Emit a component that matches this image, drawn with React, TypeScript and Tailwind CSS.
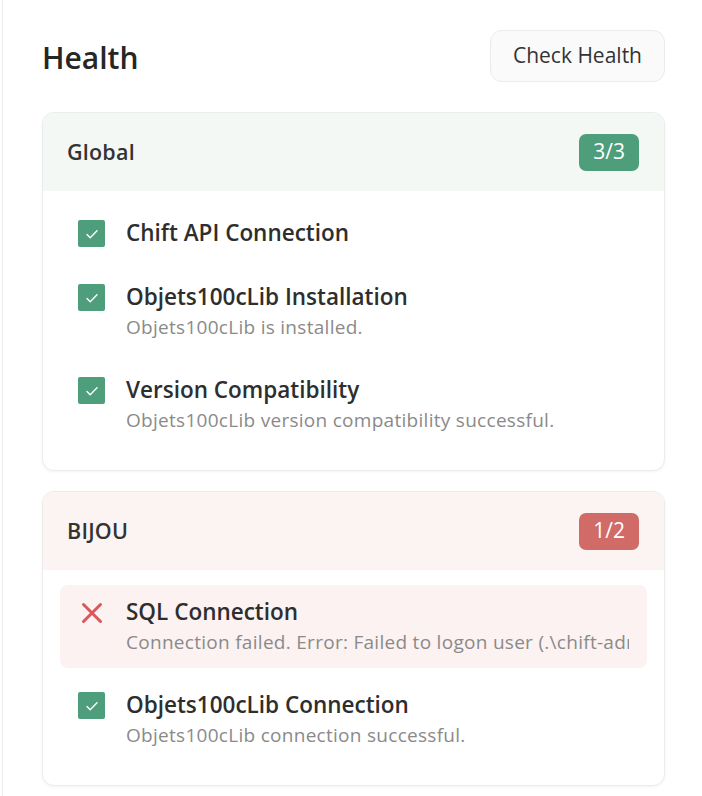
import React from 'react';

type Check = {
  title: string;
  detail?: string;
  ok: boolean;
};

type Group = {
  name: string;
  checks: Check[];
};

const groups: Group[] = [
  {
    name: 'Global',
    checks: [
      { title: 'Chift API Connection', ok: true },
      { title: 'Objets100cLib Installation', detail: 'Objets100cLib is installed.', ok: true },
      {
        title: 'Version Compatibility',
        detail: 'Objets100cLib version compatibility successful.',
        ok: true,
      },
    ],
  },
  {
    name: 'BIJOU',
    checks: [
      {
        title: 'SQL Connection',
        detail:
          'Connection failed. Error: Failed to logon user (.\\chift-admin): The user name or password is incorrect.',
        ok: false,
      },
      {
        title: 'Objets100cLib Connection',
        detail: 'Objets100cLib connection successful.',
        ok: true,
      },
    ],
  },
];

function CheckedBox() {
  return (
    <span className="flex h-[27px] w-[27px] shrink-0 items-center justify-center rounded-[2px] bg-[#4e9e7b]">
      <svg width="16" height="16" viewBox="0 0 16 16" fill="none">
        <path d="M3 8.5l3.2 3.2L13 4.8" stroke="#ffffff" strokeWidth="1.4" strokeLinecap="round" strokeLinejoin="round" />
      </svg>
    </span>
  );
}

function FailCross() {
  return (
    <span className="flex h-[27px] w-[27px] shrink-0 items-center justify-center">
      <svg width="24" height="24" viewBox="0 0 24 24" fill="none">
        <path d="M3.5 3.5l17 17M20.5 3.5l-17 17" stroke="#d9585a" strokeWidth="3" strokeLinecap="round" />
      </svg>
    </span>
  );
}

function GroupCard({ group }: { group: Group }) {
  const passed = group.checks.filter((c) => c.ok).length;
  const allOk = passed === group.checks.length;

  return (
    <div className="overflow-hidden rounded-xl border border-[#ececec] bg-white shadow-[0_1px_3px_rgba(0,0,0,0.05)]">
      <div
        className={`flex h-[78px] items-center justify-between pl-[24px] pr-[25px] ${
          allOk ? 'bg-[#f3f8f5]' : 'bg-[#fbf4f2]'
        }`}
      >
        <span className="text-[21.5px] font-semibold tracking-[0.01em] text-[#333333]">{group.name}</span>
        <span
          className={`flex h-[37px] items-center rounded-[7px] px-[14px] text-[21px] text-white ${
            allOk ? 'bg-[#4e9e7b]' : 'bg-[#d06b68]'
          }`}
        >
          {passed}/{group.checks.length}
        </span>
      </div>
      <div className="flex flex-col gap-[10px] px-[17px] pb-[24px] pt-[15px]">
        {group.checks.map((check, i) => (
          <div
            key={i}
            className={`flex gap-[21px] rounded-lg px-[18px] py-[11px] ${check.ok ? '' : 'bg-[#fcf2f1]'}`}
          >
            <div className="pt-[3px]">{check.ok ? <CheckedBox /> : <FailCross />}</div>
            <div className="min-w-0 flex-1">
              <div className="text-[22.5px] font-semibold leading-[32px] text-[#2e2e2e]">{check.title}</div>
              {check.detail && (
                <div className="overflow-hidden whitespace-nowrap text-[19px] leading-[29px] tracking-[0.015em] text-[#8a8a8a]">
                  {check.detail}
                </div>
              )}
            </div>
          </div>
        ))}
      </div>
    </div>
  );
}

export default function App() {
  return (
    <div
      className="h-[796px] w-full bg-white"
      style={{ fontFamily: '"Open Sans", "Noto Sans", sans-serif' }}
    >
      <div className="ml-[2px] h-full border-l border-[#ededed] pl-[39px] pr-[37px] pt-[30px]">
        <div className="flex items-center justify-between">
          <h1 className="pt-[3px] text-[30px] font-semibold text-[#262626]">Health</h1>
          <button className="h-[52px] rounded-xl border border-[#ebebeb] bg-[#fafafa] px-[22px] text-[21px] text-[#333333]">
            Check Health
          </button>
        </div>
        <div className="mt-[30px] flex flex-col gap-[20px]">
          {groups.map((g) => (
            <GroupCard key={g.name} group={g} />
          ))}
        </div>
      </div>
    </div>
  );
}
